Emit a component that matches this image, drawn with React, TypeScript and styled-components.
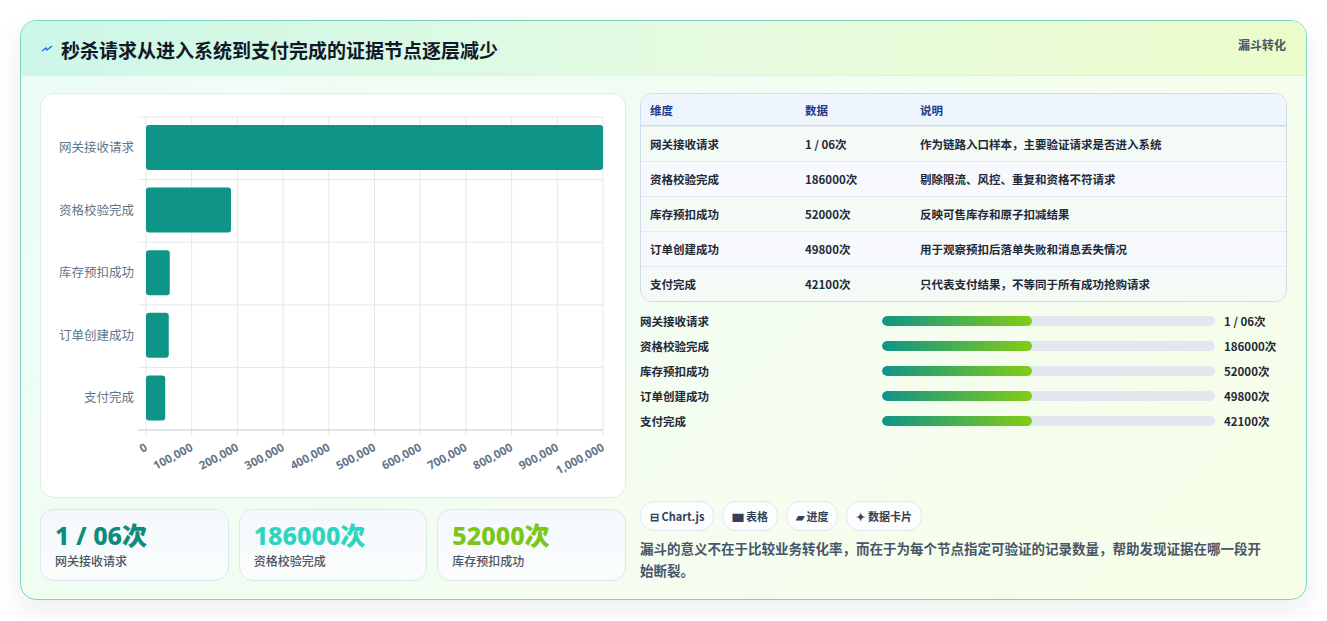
import React from "react";
import styled, { createGlobalStyle } from "styled-components";

const GlobalStyle = createGlobalStyle`
  html, body { margin: 0; background: #fff; }
  body { font-family: "Noto Sans CJK SC", "Noto Sans", sans-serif; color: #1f2937; }
`;

const steps = [
  { label: "网关接收请求", value: 1000000, text: "1 / 06次", note: "作为链路入口样本，主要验证请求是否进入系统" },
  { label: "资格校验完成", value: 186000, text: "186000次", note: "剔除限流、风控、重复和资格不符请求" },
  { label: "库存预扣成功", value: 52000, text: "52000次", note: "反映可售库存和原子扣减结果" },
  { label: "订单创建成功", value: 49800, text: "49800次", note: "用于观察预扣后落单失败和消息丢失情况" },
  { label: "支付完成", value: 42100, text: "42100次", note: "只代表支付结果，不等同于所有成功抢购请求" },
];

const Page = styled.div`
  padding: 20px;
`;

const Card = styled.section`
  border: 1px solid #7dd3c0;
  border-radius: 16px;
  overflow: hidden;
  background: linear-gradient(135deg, #ecfdf7 0%, #f4fdf0 60%, #f7fee7 100%);
  box-shadow: 0 10px 28px rgba(15, 23, 42, 0.08);
`;

const Header = styled.header`
  height: 54px;
  display: flex;
  align-items: center;
  justify-content: space-between;
  padding: 0 20px;
  background: linear-gradient(90deg, #ccf7e9 0%, #e6fbe0 55%, #ecfccb 100%);
  border-bottom: 1px solid #dcf3ec;
`;

const Title = styled.h1`
  margin: 0;
  font-size: 19px;
  font-weight: 700;
  color: #111827;
  display: flex;
  align-items: center;
  gap: 8px;
  margin-top: 2px;
`;

const Tag = styled.span`
  font-size: 12px;
  font-weight: 700;
  color: #4b5563;
  align-self: flex-start;
  margin-top: 15px;
`;

const Body = styled.div`
  display: grid;
  grid-template-columns: 586px 1fr;
  gap: 14px;
  padding: 17px 19px 18px 19px;
`;

const Column = styled.div<{ $gap: number }>`
  display: flex;
  flex-direction: column;
  gap: ${(p) => p.$gap}px;
`;

const ChartPanel = styled.div`
  height: 403px;
  background: #fff;
  border: 1px solid #e2ebe8;
  border-radius: 14px;
`;

const Stats = styled.div`
  display: grid;
  grid-template-columns: repeat(3, 1fr);
  gap: 10px;
`;

const Stat = styled.div`
  height: 72px;
  box-sizing: border-box;
  padding: 10px 14px;
  border: 1px solid #dbe7ef;
  border-radius: 14px;
  background: linear-gradient(180deg, #f4f8fd, #fbfdfc);
`;

const StatValue = styled.div<{ $color: string }>`
  font-size: 25px;
  font-weight: 800;
  line-height: 30px;
  color: ${(p) => p.$color};
  font-family: "Noto Sans", "Noto Sans CJK SC", sans-serif;
`;

const StatLabel = styled.div`
  font-size: 12px;
  font-weight: 500;
  color: #4b5563;
  margin-top: 2px;
`;

const Table = styled.table`
  width: 100%;
  border-collapse: separate;
  border-spacing: 0;
  border: 1px solid #cfdbe8;
  border-radius: 12px;
  overflow: hidden;
  font-size: 11.5px;
  background: #fff;
`;

const Th = styled.th`
  text-align: left;
  font-weight: 700;
  color: #1e3a8a;
  height: 31px;
  padding: 0 9px;
  background: #eef5fd;
  border-bottom: 1px solid #cfdbe8;
`;

const Td = styled.td<{ $alt: boolean }>`
  height: 34px;
  padding: 0 9px;
  color: #1f2937;
  font-weight: 600;
  background: ${(p) => (p.$alt ? "#f7f9fc" : "#f4fbf6")};
  border-top: 1px solid #e5eaf0;
`;

const Progress = styled.div`
  display: flex;
  flex-direction: column;
  gap: 6px;
  margin-top: 0;
`;

const PRow = styled.div`
  display: grid;
  grid-template-columns: 233px 333px 1fr;
  align-items: center;
  gap: 9px;
  font-size: 11.5px;
  height: 19px;
`;

const PLabel = styled.span`
  color: #1f2937;
  font-weight: 600;
`;

const Track = styled.div`
  height: 10px;
  border-radius: 6px;
  background: #e2e8f0;
  overflow: hidden;
`;

const Fill = styled.div`
  height: 100%;
  border-radius: 6px;
  background: linear-gradient(90deg, #0f9488, #84cc16);
`;

const PValue = styled.span`
  font-weight: 700;
  color: #1f2937;
`;

const Footer = styled.div`
  flex: 1;
  display: flex;
  flex-direction: column;
  justify-content: flex-end;
`;

const Chips = styled.div`
  display: flex;
  gap: 8px;
`;

const Chip = styled.span`
  height: 28px;
  display: inline-flex;
  align-items: center;
  gap: 4px;
  padding: 0 9px;
  border: 1px solid #e2e8f0;
  border-radius: 14px;
  background: #fbfdff;
  font-size: 11px;
  font-weight: 700;
  color: #334155;
`;

const Note = styled.p`
  margin: 6px 0 0;
  max-width: 630px;
  font-size: 13.5px;
  line-height: 22px;
  color: #475569;
  font-weight: 600;
`;

function Chart() {
  const x0 = 105, x1 = 562, top = 23, bottom = 336;
  const rowH = (bottom - top) / 5;
  const ticks = Array.from({ length: 11 }, (_, i) => i);
  return (
    <svg width="586" height="403" style={{ display: "block" }}>
      {ticks.map((i) => {
        const x = x0 + ((x1 - x0) * i) / 10;
        return <line key={i} x1={x} x2={x} y1={top} y2={bottom + 6} stroke="#e5e7eb" />;
      })}
      {[0, 1, 2, 3, 4, 5].map((i) => (
        <line key={i} x1={x0 - 8} x2={x1} y1={top + rowH * i} y2={top + rowH * i} stroke="#e5e7eb" />
      ))}
      <line x1={x0 - 8} x2={x1} y1={bottom} y2={bottom} stroke="#cbd5e1" />
      {steps.map((s, i) => {
        const y = top + rowH * i + 8;
        const w = Math.max(((x1 - x0) * s.value) / 1000000, 16);
        return (
          <g key={s.label}>
            <rect x={x0} y={y} width={w} height={45} rx={3} fill="#0f9488" />
            <text x={x0 - 12} y={y + 27} textAnchor="end" fontSize="12.5" fill="#64748b"
              fontFamily="Noto Sans CJK SC, sans-serif">{s.label}</text>
          </g>
        );
      })}
      {ticks.map((i) => {
        const x = x0 + ((x1 - x0) * i) / 10;
        const label = i === 10 ? "1,000,000" : i === 0 ? "0" : `${i}00,000`;
        return (
          <text key={i} x={x + 2} y={bottom + 20} textAnchor="end" fontSize="11.5" fontWeight="700"
            fill="#64748b" fontFamily="Noto Sans, sans-serif" transform={`rotate(-28 ${x + 2} ${bottom + 20})`}>
            {label}
          </text>
        );
      })}
    </svg>
  );
}

export default function App() {
  return (
    <Page>
      <GlobalStyle />
      <Card>
        <Header>
          <Title>
            <svg width="12" height="12" viewBox="0 0 12 12">
              <path d="M1 8 L5 5 L6 7 L11 3" stroke="#2563eb" strokeWidth="1.4" fill="none" />
            </svg>
            秒杀请求从进入系统到支付完成的证据节点逐层减少
          </Title>
          <Tag>漏斗转化</Tag>
        </Header>
        <Body>
          <Column $gap={11}>
            <ChartPanel>
              <Chart />
            </ChartPanel>
            <Stats>
              <Stat>
                <StatValue $color="#0f8b7e">1 / 06次</StatValue>
                <StatLabel>网关接收请求</StatLabel>
              </Stat>
              <Stat>
                <StatValue $color="#2dd4bf">186000次</StatValue>
                <StatLabel>资格校验完成</StatLabel>
              </Stat>
              <Stat>
                <StatValue $color="#7cc61a">52000次</StatValue>
                <StatLabel>库存预扣成功</StatLabel>
              </Stat>
            </Stats>
          </Column>
          <Column $gap={9}>
            <Table>
              <thead>
                <tr>
                  <Th style={{ width: 137 }}>维度</Th>
                  <Th style={{ width: 97 }}>数据</Th>
                  <Th>说明</Th>
                </tr>
              </thead>
              <tbody>
                {steps.map((s, i) => (
                  <tr key={s.label}>
                    <Td $alt={i % 2 === 1}>{s.label}</Td>
                    <Td $alt={i % 2 === 1}>{s.text}</Td>
                    <Td $alt={i % 2 === 1}>{s.note}</Td>
                  </tr>
                ))}
              </tbody>
            </Table>
            <Progress>
              {steps.map((s) => (
                <PRow key={s.label}>
                  <PLabel>{s.label}</PLabel>
                  <Track>
                    <Fill style={{ width: "45%" }} />
                  </Track>
                  <PValue>{s.text}</PValue>
                </PRow>
              ))}
            </Progress>
            <Footer>
              <Chips>
                <Chip>⊟ Chart.js</Chip>
                <Chip>▆ 表格</Chip>
                <Chip>▰ 进度</Chip>
                <Chip>✦ 数据卡片</Chip>
              </Chips>
              <Note>漏斗的意义不在于比较业务转化率，而在于为每个节点指定可验证的记录数量，帮助发现证据在哪一段开始断裂。</Note>
            </Footer>
          </Column>
        </Body>
      </Card>
    </Page>
  );
}
